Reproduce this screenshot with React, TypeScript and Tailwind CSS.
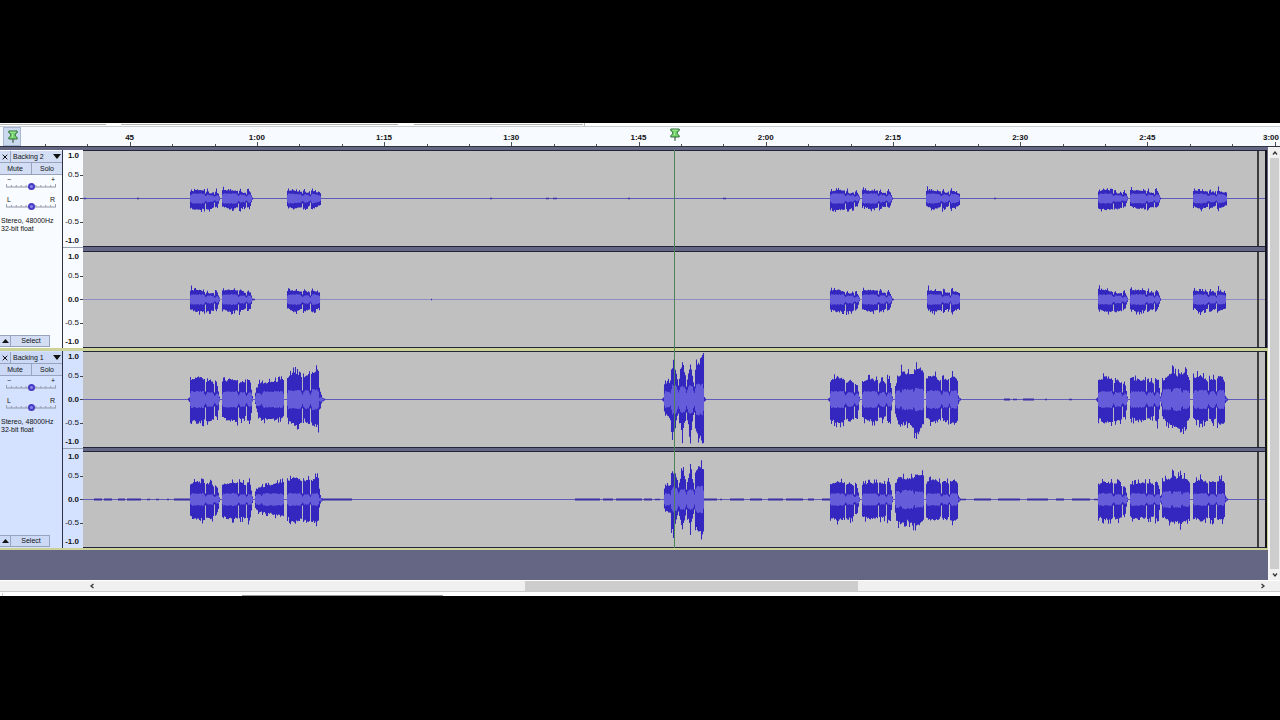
import React from "react";

// x0, x1, top start/middle/end, bottom start/middle/end, rms half height
type Seg = [number, number, number, number, number, number, number, number, number];
// x0, x1 of low-level noise drawn as a thick zero line
type Noise = [number, number];

const shift = (segs: Seg[], dx: number): Seg[] =>
  segs.map((s) => [s[0] + dx, s[1] + dx, s[2], s[3], s[4], s[5], s[6], s[7], s[8]]);

const soft: Seg[] = [
  [0, 15, 7, 9, 8, 10, 12, 11, 5],
  [16, 24, 7, 5, 6, 11, 11, 10, 4],
  [25, 30, 7, 6, 2, 9, 8, 2, 3],
  [32, 48, 9, 8, 8, 8, 11, 9, 5],
  [49, 56, 8, 6, 6, 12, 9, 9, 4],
  [57, 63, 8, 7, 1, 9, 9, 1, 4],
];

const softTail: Seg[] = [
  [97, 112, 8, 8, 7, 8, 11, 9, 5],
  [113, 120, 8, 6, 6, 11, 9, 8, 4],
  [121, 131, 8, 7, 5, 11, 9, 7, 5],
];

const softLower: Seg[] = [
  [0, 15, 9, 10, 8, 10, 13, 12, 5],
  [16, 24, 7, 6, 7, 13, 12, 12, 4],
  [25, 30, 8, 6, 2, 11, 9, 2, 3],
  [32, 48, 9, 10, 9, 10, 13, 11, 5],
  [49, 56, 9, 7, 7, 13, 11, 10, 4],
  [57, 63, 8, 7, 1, 12, 10, 1, 4],
];

const softLowerTail: Seg[] = [
  [97, 112, 9, 9, 8, 9, 13, 10, 5],
  [113, 120, 9, 7, 7, 13, 11, 10, 4],
  [121, 130, 9, 8, 7, 13, 11, 9, 5],
];

const loud: Seg[] = [
  [-2, 0, 1, 1, 2, 1, 1, 2, 0],
  [0, 15, 19, 23, 21, 20, 24, 22, 8],
  [16, 24, 17, 20, 17, 21, 22, 20, 7],
  [25, 30, 16, 14, 3, 18, 20, 2, 6],
  [32, 48, 18, 21, 19, 19, 22, 22, 8],
  [49, 56, 17, 19, 17, 19, 20, 17, 7],
  [57, 63, 21, 20, 3, 22, 25, 2, 7],
];

const loudTail: Seg[] = [
  [97, 112, 22, 25, 19, 20, 24, 21, 9],
  [113, 120, 20, 21, 20, 20, 23, 21, 8],
  [121, 129, 22, 25, 19, 24, 25, 23, 9],
  [129, 132, 4, 2, 1, 4, 2, 1, 1],
];

const loudLower: Seg[] = [
  [0, 15, 16, 18, 17, 18, 21, 20, 6],
  [16, 24, 16, 17, 14, 19, 20, 18, 5],
  [25, 30, 14, 12, 2, 16, 14, 2, 4],
  [32, 48, 15, 17, 17, 18, 20, 19, 6],
  [49, 56, 17, 17, 15, 19, 19, 18, 5],
  [57, 63, 18, 18, 3, 20, 22, 3, 5],
];

const loudLowerTail: Seg[] = [
  [97, 112, 17, 21, 17, 19, 22, 19, 6],
  [113, 120, 18, 19, 17, 20, 21, 19, 5],
  [121, 129, 18, 21, 17, 21, 22, 19, 6],
  [129, 132, 4, 2, 1, 3, 2, 1, 1],
];

const tracks = [
  {
    name: "Backing 2",
    selected: false,
    channels: [
      {
        segs: [
          ...shift(soft, 190), ...shift(softTail, 190),
          ...shift(soft, 830), ...shift(softTail, 829),
          ...shift(soft, 1098), ...shift(softTail, 1096),
        ],
        noise: [[84, 86], [137, 139], [490, 492], [546, 549], [553, 557], [628, 630], [723, 726], [994, 996]] as Noise[],
        thin: false,
      },
      {
        segs: [
          ...shift(softLower, 190), ...shift(softLowerTail, 190),
          ...shift(softLower, 830), ...shift(softLowerTail, 830),
          ...shift(softLower, 1098), ...shift(softLowerTail, 1096),
        ],
        noise: [[253, 255], [431, 432], [892, 894]] as Noise[],
        thin: true,
      },
    ],
  },
  {
    name: "Backing 1",
    selected: true,
    channels: [
      {
        segs: [
          ...shift(loud, 190),
          [255, 262, 7, 16, 18, 5, 16, 21, 6],
          [262, 284, 16, 18, 20, 20, 21, 18, 8],
          [287, 302, 21, 28, 22, 20, 27, 23, 9],
          [303, 310, 22, 24, 28, 20, 23, 26, 9],
          [311, 319, 26, 28, 30, 25, 27, 28, 10],
          [319, 325, 12, 2, 1, 11, 2, 1, 2],
          [662, 664, 1, 1, 2, 1, 1, 2, 0],
          [664, 671, 15, 18, 16, 12, 17, 21, 8],
          [671, 678, 32, 34, 22, 34, 34, 17, 14],
          [679, 686, 20, 38, 24, 20, 37, 18, 13],
          [687, 694, 20, 36, 18, 20, 37, 15, 13],
          [695, 704, 32, 38, 46, 30, 38, 44, 15],
          [704, 706, 2, 1, 1, 2, 1, 1, 0],
          ...shift(loud, 830),
          [895, 901, 14, 22, 24, 15, 24, 27, 9],
          [901, 914, 29, 26, 25, 26, 24, 28, 10],
          [914, 924, 30, 33, 28, 32, 35, 24, 11],
          ...shift(loudTail, 829),
          ...shift(loud, 1098),
          [1162, 1172, 18, 23, 28, 18, 23, 26, 10],
          [1172, 1182, 29, 24, 28, 28, 27, 34, 11],
          [1182, 1190, 27, 27, 21, 30, 26, 20, 9],
          ...shift(loudTail, 1096),
        ] as Seg[],
        noise: [[1004, 1010], [1013, 1017], [1023, 1034], [1045, 1047], [1069, 1072]] as Noise[],
        thin: false,
      },
      {
        segs: [
          ...shift(loudLower, 190),
          [255, 262, 8, 12, 13, 9, 12, 13, 5],
          [262, 284, 13, 15, 18, 13, 15, 18, 6],
          [287, 302, 18, 23, 19, 18, 24, 20, 6],
          [303, 310, 18, 20, 20, 19, 23, 22, 5],
          [311, 319, 19, 22, 22, 22, 24, 21, 6],
          [319, 323, 9, 2, 1, 8, 2, 1, 2],
          [664, 671, 12, 14, 14, 9, 13, 14, 6],
          [671, 678, 28, 28, 20, 33, 32, 16, 12],
          [679, 686, 17, 31, 20, 17, 30, 16, 10],
          [687, 694, 17, 30, 17, 17, 30, 14, 10],
          [695, 704, 28, 34, 32, 30, 32, 35, 13],
          ...shift(loudLower, 830),
          [895, 901, 14, 22, 22, 14, 24, 24, 8],
          [901, 914, 22, 21, 22, 24, 22, 26, 9],
          [914, 924, 24, 26, 24, 26, 27, 21, 8],
          ...shift(loudLowerTail, 829),
          ...shift(loudLower, 1098),
          [1162, 1172, 18, 21, 22, 18, 20, 23, 8],
          [1172, 1182, 25, 22, 25, 24, 23, 26, 8],
          [1182, 1190, 22, 22, 18, 24, 22, 18, 7],
          ...shift(loudLowerTail, 1096),
        ] as Seg[],
        noise: [
          [94, 102], [104, 112], [118, 125], [127, 141], [147, 150], [156, 159], [167, 169], [174, 190],
          [323, 352], [575, 600], [603, 613], [616, 642], [644, 652], [655, 660], [704, 717], [720, 722],
          [730, 744], [750, 762], [768, 783], [786, 803], [808, 814], [822, 830], [961, 966], [974, 991],
          [998, 1020], [1027, 1048], [1056, 1064], [1072, 1090], [1094, 1098],
        ] as Noise[],
        thin: false,
      },
    ],
  },
];

const hash = (n: number) => {
  const v = Math.sin(n * 12.9898) * 43758.5453;
  return v - Math.floor(v);
};

const at = (a: number, b: number, c: number, t: number) =>
  t < 0.5 ? a + (b - a) * t * 2 : b + (c - b) * (t - 0.5) * 2;

const bar = (x: number, up: number, down: number) =>
  `M${x + 0.5} ${Math.max(1, 47.5 - up).toFixed(1)}V${Math.min(94.5, 47.5 + down).toFixed(1)}`;

function buildWave(segs: Seg[], seed: number) {
  let peak = "";
  let rms = "";
  segs.forEach(([x0, x1, a, b, c, d, e, f, r], i) => {
    for (let x = x0; x < x1; x++) {
      const t = x1 - x0 > 1 ? (x - x0) / (x1 - x0 - 1) : 0;
      const n1 = hash(x + seed);
      const n2 = hash(x * 1.7 + seed + 5);
      // quiet syllables begin with a short attack spike
      const attack = b <= 10 && b > 4 && x === x0 + 1 ? 1.3 : 1;
      const up = at(a, b, c, t) * attack * (0.92 + n1 * 0.14 + (n1 > 0.82 ? 0.14 : 0));
      const down = at(d, e, f, t) * (0.9 + n2 * 0.16 + (n2 > 0.85 ? 0.14 : 0));
      peak += bar(x, up, down);
      const edge = x === x0 || x === x1 - 1 ? 0.75 : 1;
      const h = Math.min(r, at(a, b, c, t) * 0.6) * edge * (0.92 + n2 * 0.16);
      if (h > 0.6) rms += bar(x, h, h);
    }
    // adjoining syllables stay joined by a narrow waist
    const next = segs[i + 1];
    if (next && next[0] - x1 === 1) {
      peak += bar(x1, r, r);
      rms += bar(x1, r * 0.5, r * 0.5);
    }
  });
  return { peak, rms };
}

function Wave({ segs, noise, thin, seed }: { segs: Seg[]; noise: Noise[]; thin: boolean; seed: number }) {
  const { peak, rms } = buildWave(segs, seed);
  return (
    <svg viewBox="83 0 1182 95" preserveAspectRatio="none" className="block h-[95px] w-full min-w-0 flex-1 bg-[#c0c0c0]" aria-hidden="true">
      <path d="M83 47.5H1265" stroke={thin ? "#8f8cc4" : "#5f5bb8"} strokeWidth="1" />
      {noise.map(([a, b]) => (
        <path key={a} d={`M${a} 47.5H${b}`} stroke="#3a30a8" strokeWidth={b - a > 5 ? 2 : 1.5} />
      ))}
      <path d={peak} stroke="#3427bf" strokeWidth="1.05" />
      <path d={rms} stroke="#645cd8" strokeWidth="1.05" />
      <path d="M1258 0V95" stroke="#3c3c3c" strokeWidth="2" />
    </svg>
  );
}

function Pin() {
  return (
    <svg viewBox="0 0 10 13" className="block h-[13px] w-[10px]" aria-hidden="true">
      <path d="M.8 1H9.200V2.800L7.300 3.800V6L9.200 7.500V9H.8V7.500L2.700 6V3.800L.8 2.800Z" fill="#74d46c" stroke="#35713f" strokeWidth="1" />
      <path d="M2.500 2.200H7.500M4.500 4V7.500" stroke="#b4f0a6" strokeWidth=".8" />
      <path d="M5 9V12.800" stroke="#3c5c44" strokeWidth="1.200" />
    </svg>
  );
}

function Slider({ label, left, right }: { label: string; left: string; right: string }) {
  return (
    <label className="block h-5 px-[6px] pt-px">
      <span className="flex justify-between px-px text-[7px] leading-[7px]">
        <span>{left}</span>
        <span>{right}</span>
      </span>
      <span className="relative block h-[7px]">
        <svg viewBox="0 0 51 7" preserveAspectRatio="none" className="absolute inset-0 h-full w-full" aria-hidden="true">
          <path d="M0 4H51" stroke="#8d93a3" strokeWidth="1" />
          <path d="M.5 1V4M5.500 2V4M10.500 2V4M15.500 2V4M20.500 2V4M30.500 2V4M35.500 2V4M40.500 2V4M45.500 2V4M50.500 1V4" stroke="#9ba1b0" strokeWidth="1" />
        </svg>
        <input
          type="range"
          aria-label={label}
          defaultValue={50}
          className="relative m-0 block h-[7px] w-full appearance-none bg-transparent [&::-webkit-slider-thumb]:h-[7px] [&::-webkit-slider-thumb]:w-[7px] [&::-webkit-slider-thumb]:appearance-none [&::-webkit-slider-thumb]:rounded-full [&::-webkit-slider-thumb]:border-2 [&::-webkit-slider-thumb]:border-[#463bc6] [&::-webkit-slider-thumb]:bg-[#8d8ae4]"
        />
      </span>
    </label>
  );
}

function Scale() {
  const rows = [
    { v: "1.0", strong: true, tick: false },
    { v: "0.5", strong: false, tick: true },
    { v: "0.0", strong: true, tick: true },
    { v: "-0.5", strong: false, tick: true },
    { v: "-1.0", strong: true, tick: false },
  ];
  return (
    <div className="grid w-5 shrink-0 grid-rows-[10px_28px_19px_28px_10px] text-[8px] leading-[10px]">
      {rows.map((r) => (
        <div key={r.v} className="flex items-center justify-end gap-px">
          <span className={r.strong ? "font-bold" : ""}>{r.v}</span>
          <span className={r.tick ? "h-px w-[3px] bg-[#444]" : "h-px w-[3px]"} />
        </div>
      ))}
    </div>
  );
}

function TrackPanel({ name, selected }: { name: string; selected: boolean }) {
  const btn = selected ? "bg-[#cbd9f6] border-[#98a3bd]" : "bg-[#d3def5] border-[#98a3bd]";
  return (
    <div className={`flex w-[63px] shrink-0 flex-col border-r border-[#2c3144] pt-px text-[7px] leading-[8px] ${selected ? "bg-[#d4e2ff]" : "bg-[#f8fbff]"}`}>
      <div className={`flex h-3 border-b ${btn}`}>
        <button aria-label={`Close ${name}`} className="flex w-[11px] items-center justify-center border-r border-[#98a3bd]">
          <svg viewBox="0 0 6 6" className="h-[6px] w-[6px]" aria-hidden="true">
            <path d="M.7.7L5.300 5.300M5.300.7L.7 5.300" stroke="#111" strokeWidth="1" />
          </svg>
        </button>
        <button className="flex flex-1 items-center justify-between pr-px pl-[2px]">
          <span>{name}</span>
          <svg viewBox="0 0 8 5" className="h-[5px] w-[8px]" aria-hidden="true">
            <path d="M0 0H8L4 5Z" fill="#111" />
          </svg>
        </button>
      </div>
      <div className={`flex h-3 border-b ${btn}`}>
        <button className="flex-1 border-r border-[#98a3bd] pr-px">Mute</button>
        <button className="flex-1">Solo</button>
      </div>
      <Slider label={`${name} gain`} left="−" right="+" />
      <Slider label={`${name} pan`} left="L" right="R" />
      <div className="pt-[2px] pl-px whitespace-nowrap">
        Stereo, 48000Hz
        <br />
        32-bit float
      </div>
      <div className={`mt-auto mb-px flex h-3 w-[50px] border border-l-0 ${btn}`}>
        <button aria-label={`Collapse ${name}`} className="flex w-[11px] items-center justify-center border-r border-[#98a3bd]">
          <svg viewBox="0 0 7 4" className="h-[4px] w-[7px]" aria-hidden="true">
            <path d="M0 4H7L3.500 0Z" fill="#111" />
          </svg>
        </button>
        <button className="flex-1 pl-[2px]">Select</button>
      </div>
    </div>
  );
}

const ruler = ["45", "1:00", "1:15", "1:30", "1:45", "2:00", "2:15", "2:30", "2:45"];

function Ruler() {
  const ticks = Array.from({ length: 30 }, (_, i) => 45 + i * 42.4);
  return (
    <div className="relative flex h-5 border-b border-[#30343f] bg-[#f7faff]">
      <div className="flex w-[66px] shrink-0 pl-[3px]">
        <button aria-label="Pinned play head" className="flex h-[19px] w-[18px] items-center justify-center border border-[#a9b8d2] bg-[#cbd9ef] pl-[2px]">
          <Pin />
        </button>
      </div>
      {ruler.map((t) => (
        <span key={t} className="flex-1 text-center text-[8px] leading-[21px] font-bold">{t}</span>
      ))}
      <span className="w-[69px] shrink-0 pr-px text-right text-[8px] leading-[21px] font-bold">3:00</span>
      <svg viewBox="0 0 1280 5" preserveAspectRatio="none" className="absolute bottom-0 left-0 h-[5px] w-full" aria-hidden="true">
        {ticks.map((x, i) => (
          <path key={i} d={`M${Math.round(x) + 0.5} ${i % 3 === 2 ? 1 : 3}V5`} stroke="#4a4e58" strokeWidth="1" />
        ))}
      </svg>
    </div>
  );
}

function Chevron({ d }: { d: string }) {
  return (
    <svg viewBox="0 0 6 6" className="h-[6px] w-[6px]" aria-hidden="true">
      <path d={d} fill="none" stroke="#333" strokeWidth="1.300" />
    </svg>
  );
}

export default function App() {
  return (
    <div className="flex min-h-screen flex-col justify-center bg-black pb-px font-['Liberation_Sans',Arial,sans-serif] text-[#111]">
      <main className="relative">
        <div className="flex h-1 items-center border-b border-[#c9ccd2] bg-white">
          <span className="h-px w-[8.300%] bg-[#b5b5b5]" />
          <span className="ml-[15px] h-px w-[21.600%] bg-[#b5b5b5]" />
          <span className="ml-[16px] h-px w-[13.200%] bg-[#b5b5b5]" />
          <span className="ml-px h-[3px] w-px bg-[#b5b5b5]" />
        </div>
        <Ruler />
        <div className="flex bg-[#646683]">
          <div className="min-w-0 flex-1 pt-[3px] pb-[30px]">
            {tracks.map((track, ti) => (
              <section
                key={track.name}
                aria-label={track.name}
                className={track.selected ? "flex border-y-2 border-r border-t-[3px] border-[#cdd397]" : "flex pr-px"}
              >
                <TrackPanel name={track.name} selected={track.selected} />
                <div className="min-w-0 flex-1 border-r-2 border-[#14141c]">
                  {track.channels.map((ch, ci) => (
                    <div key={ci}>
                      {ci > 0 && (
                        <div className={track.selected ? "flex h-[3px] bg-[#646683]" : "flex h-1 bg-[#646683]"}>
                          <div className={track.selected ? "w-5 border-t border-[#9aa3b5] bg-[#d4e2ff]" : "w-5 border-t border-[#9aa3b5] bg-[#f8fbff]"} />
                        </div>
                      )}
                      <div className={`flex ${track.selected ? "bg-[#d4e2ff]" : "bg-[#f8fbff]"}`}>
                        <div className="py-px">
                          <Scale />
                        </div>
                        <div className="min-w-0 flex-1 border-y border-[#22243a]">
                          <Wave segs={ch.segs} noise={ch.noise} thin={ch.thin} seed={ti * 40 + ci * 13} />
                        </div>
                      </div>
                    </div>
                  ))}
                </div>
              </section>
            ))}
          </div>
          <div className="flex w-3 shrink-0 flex-col border-l-2 border-[#f6f6f6] bg-[#f0f0f0]">
            <button aria-label="Scroll up" className="flex h-[11px] items-center justify-center">
              <Chevron d="M1 4.500L3 2L5 4.500" />
            </button>
            <div className="mr-px flex-1 bg-[#cdcdcd]" />
            <button aria-label="Scroll down" className="flex h-[11px] items-center justify-center">
              <Chevron d="M1 1.500L3 4L5 1.500" />
            </button>
          </div>
        </div>
        <div className="flex h-3 border-t border-b border-t-white border-b-[#c8c8c8] bg-[#f0f0f0] pr-3 pl-[86px]">
          <button aria-label="Scroll left" className="flex w-3 items-center justify-center">
            <Chevron d="M4.500 1L2 3L4.500 5" />
          </button>
          <div className="flex-1">
            <div className="ml-[36.800%] h-full w-[28.700%] bg-[#cdcdcd]" />
          </div>
          <button aria-label="Scroll right" className="flex w-[10px] items-center justify-center">
            <Chevron d="M1.500 1L4 3L1.500 5" />
          </button>
        </div>
        <div className="flex h-1 items-end bg-white">
          <span className="ml-[2px] h-[3px] w-px bg-[#ccc]" />
          <span className="ml-[18.700%] h-px w-[15.700%] bg-[#999]" />
        </div>
        <div className="pointer-events-none absolute top-[5px] left-[52.700%] flex w-[10px] -translate-x-1/2 flex-col items-center">
          <Pin />
          <div className="mt-[9px] h-[398px] w-px bg-[#4f8257]" />
        </div>
      </main>
    </div>
  );
}
